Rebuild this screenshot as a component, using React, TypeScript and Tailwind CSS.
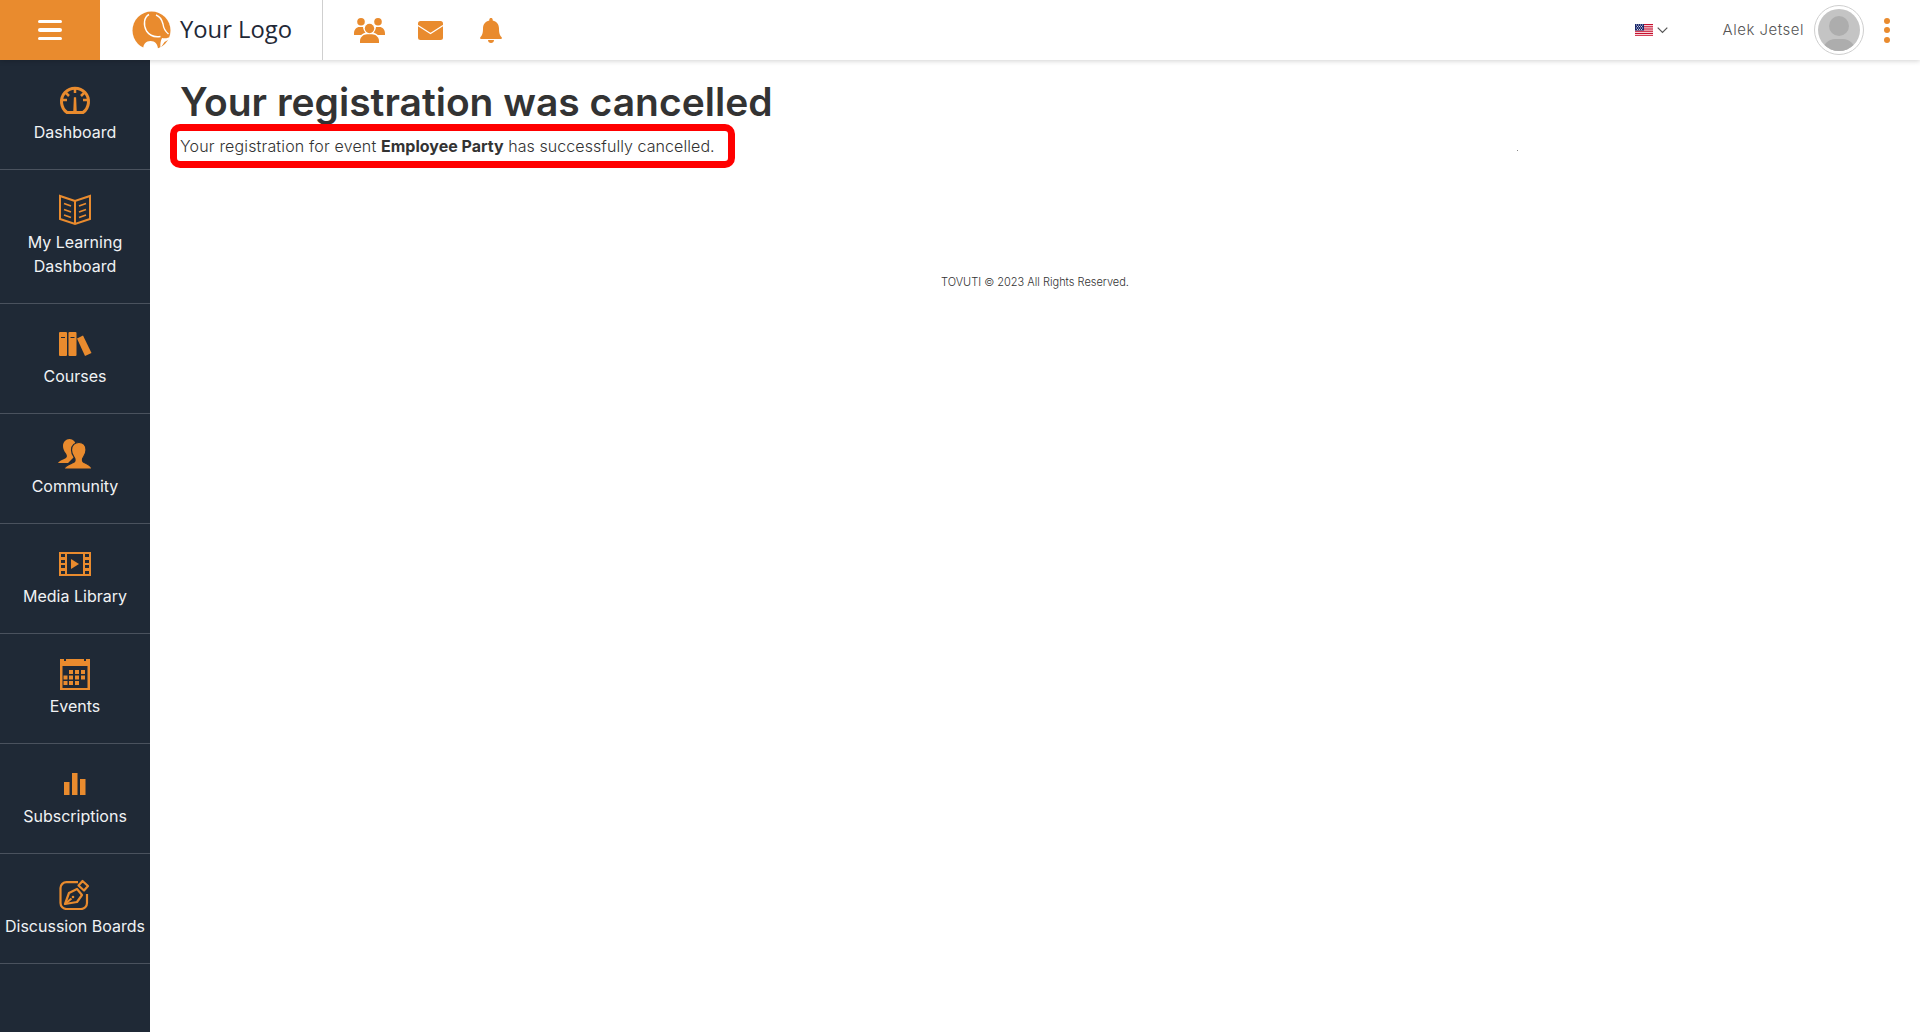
import React from 'react';

const orange = '#e98b2e';

const DashboardIcon = () => (
    <svg width="32" height="30" viewBox="0 0 32 30" fill="none" stroke={orange}>
        <path d="M8 27.5 A13.5 13.5 0 1 1 24 27.5 Z" strokeWidth="3" />
        <path d="M16 3v5M7 8l3 3M25 8l-3 3M4 15h4M28 15h-4" strokeWidth="2.5" />
        <path d="M15 27l.6-14h.8L17 27z" fill={orange} strokeWidth="1.5" />
    </svg>
);

const BookIcon = () => (
    <svg width="34" height="32" viewBox="0 0 34 32" fill="none" stroke={orange} strokeWidth="2">
        <path d="M17 7L2 2v23l15 5 15-5V2L17 7zM17 7v23" />
        <path d="M6 9.5l7 2.5M6 15.5l7 2.5M6 21l7 2.5M28 9.5l-7 2.5M28 15.5l-7 2.5M28 21l-7 2.5" strokeWidth="1.8" />
    </svg>
);

const CoursesIcon = () => (
    <svg width="34" height="24" viewBox="0 0 34 24" fill={orange}>
        <path d="M1 1a1 1 0 0 1 1-1h6a1 1 0 0 1 1 1v22a1 1 0 0 1-1 1H2a1 1 0 0 1-1-1V1zm2 4v1h4V5H3z" fillRule="evenodd" />
        <path d="M10.500 1a1 1 0 0 1 1-1h6a1 1 0 0 1 1 1v22a1 1 0 0 1-1 1h-6a1 1 0 0 1-1-1V1zm2 4v1h4V5h-4z" fillRule="evenodd" />
        <path d="M19 6.500l6-3 8.500 17.500-6.500 3z" />
    </svg>
);

const CommunityIcon = () => (
    <svg width="34" height="30" viewBox="0 0 34 30" fill={orange}>
        <path d="M0 24c2-3 6-3.500 8-5 1.500-1 1-3 0-4.500C6 12 5 9.500 5 7c0-4 3-7 6.500-7S18 3 18 7c0 3-1 6-3 8l1 3-6 6H0z" />
        <path
            d="M6 30c1-4 6-5 9.500-6.500 2-1 2-3.500.5-5.500-1.500-2-2.500-4.500-2.500-7C13.500 6 17 3.500 21 3.500S28 6 28 11c0 2.500-1 5-2.500 7-1.500 2-1.500 4.500.5 5.500C29 25 33 26 34 30H6z"
            stroke="#1f2936"
            strokeWidth="1.200"
        />
    </svg>
);

const MediaIcon = () => (
    <svg width="32" height="24" viewBox="0 0 32 24" fill={orange}>
        <path
            fillRule="evenodd"
            d="M0 0h32v24H0V0zm2 2v3h4V2H2zm0 6v3h4V8H2zm0 5v3h4v-3H2zm0 6v3h4v-3H2zm6-17v20h16V2H8zm18 0v3h4V2h-4zm0 6v3h4V8h-4zm0 5v3h4v-3h-4zm0 6v3h4v-3h-4z"
        />
        <path d="M12 7l8 5-8 5z" />
    </svg>
);

const EventsIcon = () => (
    <svg width="30" height="32" viewBox="0 0 30 32" fill={orange}>
        <path
            fillRule="evenodd"
            d="M0 1h4v2h2V1h18v2h2V1h4v31H0V1zm2.500 7v22h25V8h-25z"
        />
        <path d="M9 12h4v4H9zM15 12h4v4h-4zM21 12h4v4h-4zM3.500 17.500h4v4h-4zM9 17.500h4v4H9zM15 17.500h4v4h-4zM21 17.500h4v4h-4zM3.500 23h4v4h-4zM9 23h4v4H9zM15 23h4v4h-4z" />
    </svg>
);

const ChartIcon = () => (
    <svg width="22" height="22" viewBox="0 0 22 22" fill={orange}>
        <rect x="0" y="9" width="5.500" height="13" />
        <rect x="8" y="0" width="5.500" height="22" />
        <rect x="16" y="6" width="5.500" height="16" />
    </svg>
);

const BoardsIcon = () => (
    <svg width="33" height="31" viewBox="0 0 33 31" fill="none" stroke={orange} strokeWidth="2.200">
        <path d="M19 3.100H7.500a6 6 0 0 0-6 6V24a6 6 0 0 0 6 6H22a6 6 0 0 0 6-6V15" />
        <path d="M6 25l4-11 8-4 5 6-5 7-12 2z" strokeLinejoin="round" />
        <path d="M6 25l6.500-5.500" />
        <circle cx="14" cy="18" r="1.300" fill={orange} stroke="none" />
        <path d="M19.500 6.500l4-4.500 5.500 5-4 4.500z" strokeLinejoin="round" />
    </svg>
);

const LogoMark = () => (
    <svg width="41" height="39" viewBox="0 0 41 39">
        <circle cx="19.500" cy="19.500" r="19" fill={orange} />
        <path d="M17 3.500C12 6 11 14 14.500 20c3 4.500 8 6.500 14 5.500" fill="none" stroke="#fff" strokeWidth="1.400" />
        <path d="M24 4c4 1.500 6 5 7 9 .5 4 3 8 5.500 10" fill="none" stroke="#fff" strokeWidth="1.400" />
        <path d="M11 39c0-6 3-9 7.500-9s7.500 3 7.500 9z" fill="#fff" />
        <path d="M30 27c2 .5 4 .5 6.500-.5l3 .5-7 4-4 6c-.5-4 0-7 1.500-10z" fill="#fff" />
    </svg>
);

const MailIcon = () => (
    <svg width="25" height="19" viewBox="0 0 25 19">
        <rect width="25" height="19" rx="2.500" fill={orange} />
        <path d="M0 4.500l12.500 8L25 4.500" fill="none" stroke="#fff" strokeWidth="1.100" />
    </svg>
);

const GroupIcon = () => (
    <svg width="31" height="25" viewBox="0 0 31 25" fill={orange}>
        <circle cx="7" cy="3.800" r="3.800" />
        <circle cx="24" cy="3.800" r="3.800" />
        <circle cx="15.500" cy="10.500" r="4.700" />
        <path d="M0 15.500c0-4 2.500-6.500 5.500-6.500h3.500c.3 2.500 1.200 4.300 2.500 5.500-2.500 1-4 2.400-4.500 2.500H0v-1.500z" />
        <path d="M31 15.500c0-4-2.500-6.500-5.500-6.500H22c-.3 2.500-1.200 4.300-2.500 5.500 2.500 1 4 2.400 4.500 2.500h7v-1.500z" />
        <path d="M6 25v-2c0-4 3.500-6.800 7-6.800h5c3.500 0 7 2.800 7 6.800v2H6z" />
    </svg>
);

const BellIcon = () => (
    <svg width="22" height="25" viewBox="0 0 22 25" fill={orange}>
        <path d="M11 0c1 0 1.700.7 1.700 1.700v.9C16.500 3.400 19 6.500 19 10.500c0 5 1 7 2.500 8.500.7.800.3 2-.8 2H1.300c-1.100 0-1.500-1.200-.8-2C2 17.500 3 15.500 3 10.500c0-4 2.500-7.100 6.300-7.900v-.9C9.300.7 10 0 11 0z" />
        <path d="M8 22h6c0 1.700-1.300 3-3 3s-3-1.300-3-3z" />
    </svg>
);

const Flag = () => (
    <svg width="18" height="12" viewBox="0 0 18 12">
        <rect width="18" height="12" fill="#fff" />
        <path d="M0 .5h18M0 2.300h18M0 4.100h18M0 5.900h18M0 7.700h18M0 9.500h18M0 11.300h18" stroke="#c8102e" strokeWidth="1" />
        <rect width="9" height="6.500" fill="#1c2a6e" />
        <path d="M1 1h1M3 1h1M5 1h1M7 1h1M2 2.500h1M4 2.500h1M6 2.500h1M1 4h1M3 4h1M5 4h1M7 4h1M2 5.500h1M4 5.500h1M6 5.500h1" stroke="#fff" strokeWidth=".8" />
    </svg>
);

const navItems = [
    { label: ['Dashboard'], icon: <DashboardIcon />, tall: false },
    { label: ['My Learning', 'Dashboard'], icon: <BookIcon />, tall: true },
    { label: ['Courses'], icon: <CoursesIcon />, tall: false },
    { label: ['Community'], icon: <CommunityIcon />, tall: false },
    { label: ['Media Library'], icon: <MediaIcon />, tall: false },
    { label: ['Events'], icon: <EventsIcon />, tall: false },
    { label: ['Subscriptions'], icon: <ChartIcon />, tall: false },
    { label: ['Discussion Boards'], icon: <BoardsIcon />, tall: false },
];

const App: React.FC = () => {
    return (
        <div className="flex h-[1032px] flex-col overflow-hidden bg-white font-['Inter',sans-serif]">
            <header className="relative z-10 flex h-[60px] shrink-0 items-center bg-white shadow-[0_1px_5px_rgba(0,0,0,0.18)]">
                <div className="flex h-full w-[100px] items-center justify-center bg-[#e98b2e]">
                    <div className="flex w-6 flex-col gap-[5px]">
                        <span className="h-[3.5px] rounded-full bg-white" />
                        <span className="h-[3.5px] rounded-full bg-white" />
                        <span className="h-[3.5px] rounded-full bg-white" />
                    </div>
                </div>
                <div className="flex h-full w-[223px] items-center border-r border-[#cfcfcf] pl-[32px]">
                    <LogoMark />
                    <span className="ml-[7px] font-['Open_Sans',sans-serif] text-[23.8px] text-[#1f2937]">Your Logo</span>
                </div>
                <div className="ml-[31px] flex items-center">
                    <GroupIcon />
                    <div className="ml-[33px]">
                        <MailIcon />
                    </div>
                    <div className="ml-[37px]">
                        <BellIcon />
                    </div>
                </div>
                <div className="ml-auto flex items-center">
                    <Flag />
                    <svg className="ml-[4px]" width="11" height="7" viewBox="0 0 11 7" fill="none" stroke="#555" strokeWidth="1.200">
                        <path d="M.7.7l4.800 4.800L10.300.7" />
                    </svg>
                    <span className="ml-[55px] text-[15px] font-light tracking-[0.5px] text-[#555]">Alek Jetsel</span>
                    <div className="ml-[10px] flex h-[50px] w-[50px] items-center justify-center rounded-full border border-[#cfcfcf]">
                        <div className="relative h-[42px] w-[42px] overflow-hidden rounded-full bg-[#c4c4c4]">
                            <div className="absolute left-[11px] top-[7px] h-[20px] w-[20px] rounded-full bg-[#adadad]" />
                            <div className="absolute left-[5px] top-[30px] h-[24px] w-[32px] rounded-full bg-[#adadad]" />
                        </div>
                    </div>
                    <div className="ml-[20px] mr-[30px] flex flex-col gap-[3.500px]">
                        <span className="h-[6px] w-[6px] rounded-full bg-[#e98b2e]" />
                        <span className="h-[6px] w-[6px] rounded-full bg-[#e98b2e]" />
                        <span className="h-[6px] w-[6px] rounded-full bg-[#e98b2e]" />
                    </div>
                </div>
            </header>
            <div className="flex min-h-0 flex-1">
                <nav className="w-[150px] shrink-0 bg-[#1f2936]">
                    {navItems.map((item) => (
                        <div
                            key={item.label.join(' ')}
                            className={`flex flex-col items-center border-b border-[#4a525e] pt-[24px] ${item.tall ? 'h-[134px]' : 'h-[110px]'}`}
                        >
                            <div className="flex h-[32px] items-center justify-center">{item.icon}</div>
                            <div className="mt-[4px] whitespace-nowrap text-center text-[16px] leading-[24px] text-[#f0f2f4]">
                                {item.label.map((line) => (
                                    <div key={line}>{line}</div>
                                ))}
                            </div>
                        </div>
                    ))}
                </nav>
                <main className="relative flex-1">
                    <div className="pl-[30px] pt-[20px]">
                        <h1 className="-mt-px mb-px text-[39px] font-semibold leading-[46px] text-[#333]">Your registration was cancelled</h1>
                        <div className="relative mt-[9px] w-fit">
                            <p className="text-[16px] font-light leading-[24px] tracking-[0.16px] text-[#333]">
                                Your registration for event <strong className="font-bold tracking-normal">Employee Party</strong>
                                <span className="tracking-[0.07px]"> has successfully cancelled.</span>
                            </p>
                            <div className="absolute -left-[10px] -right-[20px] -top-[10px] -bottom-[10px] rounded-[10px] border-[7px] border-[#ff0000]" />
                        </div>
                    </div>
                    <div className="absolute left-[1367px] top-[90px] h-px w-px bg-[#888]" />
                    <p className="mt-[116px] text-center text-[11px] font-light text-[#333]">TOVUTI © 2023 All Rights Reserved.</p>
                </main>
            </div>
        </div>
    );
};

export default App;
